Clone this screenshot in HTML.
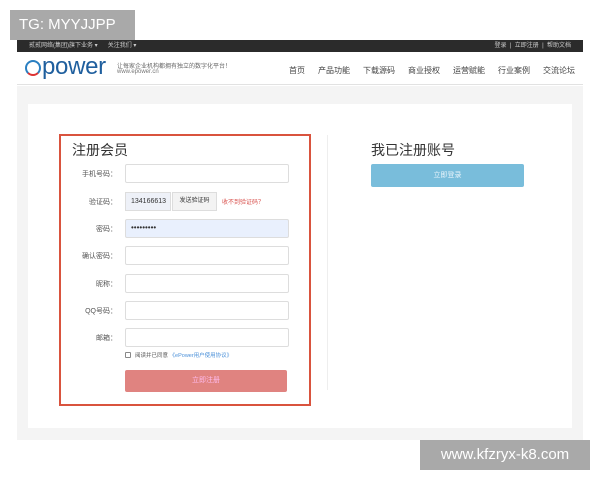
<!DOCTYPE html>
<html><head><meta charset="utf-8"><style>
*{margin:0;padding:0;box-sizing:border-box}
body{width:600px;height:480px;background:#fff;font-family:"Liberation Sans","Noto Sans CJK SC",sans-serif;position:relative;overflow:hidden;color:#333}
.abs{position:absolute}
.top{left:17px;top:40px;width:566px;height:12px;background:#2b2b2b;font-size:6px;color:#ccc;line-height:12px}
.hdr{left:17px;top:52px;width:566px;height:33px;background:#fff;border-bottom:1px solid #e2e2e2}
.bg{left:17px;top:86px;width:566px;height:354px;background:#f4f4f4}
.card{left:28px;top:104px;width:544px;height:324px;background:#fff}
.red{left:59px;top:134px;width:252px;height:272px;border:2px solid #d9533e}
.lbl{font-size:7px;color:#555;text-align:right;width:60px;left:57px}
.inp{left:125px;width:164px;height:19px;border:1px solid #ddd;background:#fff;border-radius:2px}
.nav span{margin-left:13px}
</style></head><body>
<div class="abs" style="left:10px;top:10px;width:125px;height:30px;background:#a9a9a9;color:#fff;font-size:15px;line-height:30px;padding-left:9px">TG: MYYJJPP</div>
<div class="abs top"><span style="margin-left:12px">贰贰网络(集团)旗下业务 ▾</span><span style="margin-left:10px">关注我们 ▾</span>
<span style="position:absolute;right:12px">登录 &nbsp;|&nbsp; 立即注册 &nbsp;|&nbsp; 帮助文档</span></div>
<div class="abs hdr">
<div class="abs" style="left:8px;top:8px;width:16px;height:16px;border-radius:50%;border:2.5px solid #2a7fc1;border-bottom-color:#d33"></div>
<div class="abs" style="left:25px;top:1px;font-size:24px;color:#1f5f9e;letter-spacing:-0.3px">power</div>
<div class="abs" style="left:100px;top:9px;font-size:6px;color:#666">让每家企业机构都拥有独立的数字化平台！</div>
<div class="abs" style="left:100px;top:17px;font-size:6px;color:#777">www.epower.cn</div>
<div class="abs nav" style="right:8px;top:13px;font-size:8px;color:#444"><span>首页</span><span>产品功能</span><span>下载源码</span><span>商业授权</span><span>运营赋能</span><span>行业案例</span><span>交流论坛</span></div>
</div>
<div class="abs bg"></div>
<div class="abs card"></div>
<div class="abs" style="left:327px;top:135px;width:1px;height:255px;background:#eee"></div>
<div class="abs red"></div>
<div class="abs" style="left:72px;top:140px;font-size:14px;color:#333">注册会员</div>
<div class="abs lbl" style="top:169px">手机号码：</div><div class="abs inp" style="top:164px"></div>
<div class="abs lbl" style="top:197px">验证码：</div>
<div class="abs" style="left:125px;top:192px;width:46px;height:19px;background:#eef1f8;border:1px solid #ddd;font-size:7px;line-height:17px;padding-left:5px">134166613</div>
<div class="abs" style="left:172px;top:192px;width:45px;height:19px;background:#f3f3f3;border:1px solid #ddd;font-size:6px;line-height:17px;text-align:center">发送验证码</div>
<div class="abs" style="left:222px;top:197px;font-size:6px;color:#d9534f">收不到验证码？</div>
<div class="abs lbl" style="top:224px">密码：</div><div class="abs inp" style="top:219px;background:#e9f0fd;font-size:8px;padding-left:5px;line-height:15px">•••••••••</div>
<div class="abs lbl" style="top:251px">确认密码：</div><div class="abs inp" style="top:246px"></div>
<div class="abs lbl" style="top:279px">昵称：</div><div class="abs inp" style="top:274px"></div>
<div class="abs lbl" style="top:306px">QQ号码：</div><div class="abs inp" style="top:301px"></div>
<div class="abs lbl" style="top:333px">邮箱：</div><div class="abs inp" style="top:328px"></div>
<div class="abs" style="left:125px;top:352px;width:6px;height:6px;border:1px solid #888;border-radius:1px"></div>
<div class="abs" style="left:135px;top:351px;font-size:5.5px;color:#555">阅读并已同意 <span style="color:#4a90d9">《ePower用户使用协议》</span></div>
<div class="abs" style="left:125px;top:370px;width:162px;height:22px;background:#e08380;border-radius:2px;color:#fbe;font-size:7px;text-align:center;line-height:22px">立即注册</div>
<div class="abs" style="left:371px;top:140px;font-size:14px;color:#333">我已注册账号</div>
<div class="abs" style="left:371px;top:164px;width:153px;height:23px;background:#79bddb;border-radius:2px;color:#e8f4fb;font-size:7px;text-align:center;line-height:23px">立即登录</div>
<div class="abs" style="left:420px;top:440px;width:170px;height:30px;background:#a9a9a9;color:#fff;font-size:15px;line-height:30px;text-align:center">www.kfzryx-k8.com</div>
</body></html>
